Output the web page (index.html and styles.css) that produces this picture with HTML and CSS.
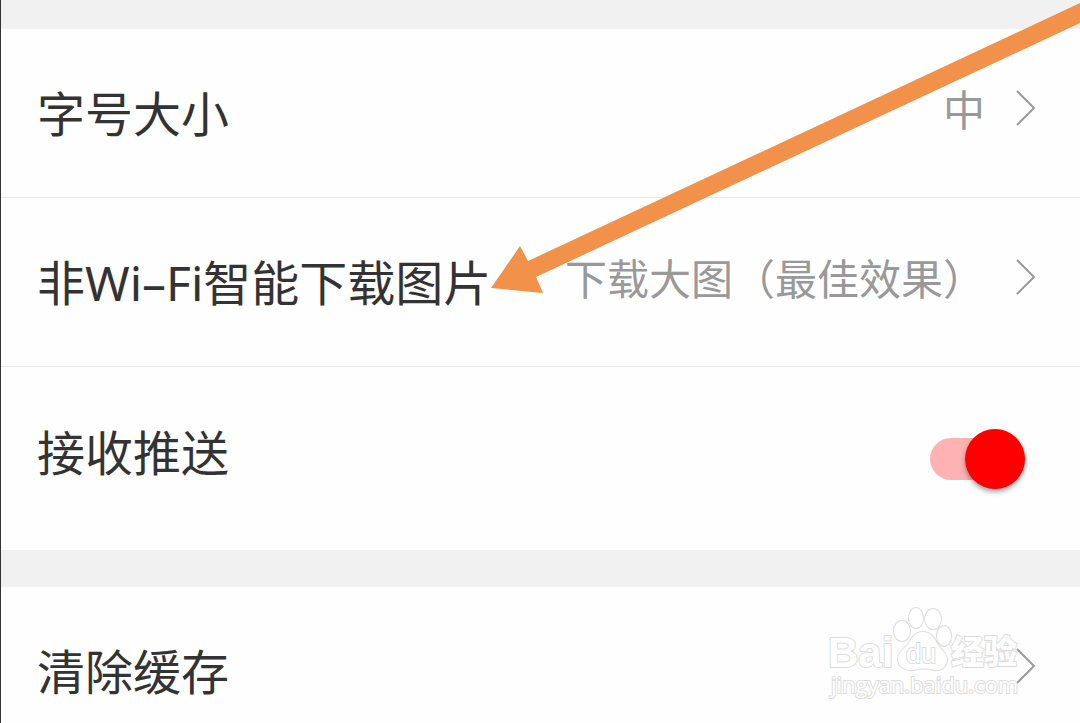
FILE: index.html
```
<!DOCTYPE html>
<html lang="zh-CN">
<head>
    <meta charset="UTF-8">
    <meta name="viewport" content="width=device-width, initial-scale=1">
    <title>设置</title>
    <link rel="stylesheet" href="styles.css">
</head>
<body>
    <main class="settings">
        <section class="group">
            <a class="row" href="#">
                <span class="label">字号大小</span>
                <span class="value">中</span>
                <svg class="chevron" viewBox="0 0 20 36" aria-hidden="true"><path d="M1 1 L18 18 L1 35"/></svg>
            </a>
            <a class="row" href="#">
                <span class="label">非Wi–Fi智能下载图片</span>
                <span class="value">下载大图（最佳效果）</span>
                <svg class="chevron" viewBox="0 0 20 36" aria-hidden="true"><path d="M1 1 L18 18 L1 35"/></svg>
            </a>
            <div class="row row-switch">
                <label class="label" for="push">接收推送</label>
                <input class="switch" type="checkbox" role="switch" id="push" checked>
            </div>
        </section>
        <section class="group">
            <a class="row" href="#">
                <span class="label">清除缓存</span>
                <svg class="chevron" viewBox="0 0 20 36" aria-hidden="true"><path d="M1 1 L18 18 L1 35"/></svg>
            </a>
        </section>
    </main>

    <svg class="arrow" viewBox="0 0 1080 300" aria-hidden="true">
        <path d="M491 288 L520 246 L528 261 L1080 3 V23 L536 277 L543 293 Z"/>
    </svg>

    <svg class="watermark" viewBox="0 0 200 96" role="img" aria-label="Baidu经验">
        <text class="wm-bai" x="0" y="64">Bai</text>
        <g class="wm-paw">
            <ellipse cx="74" cy="28" rx="8" ry="10"/>
            <ellipse cx="88" cy="15" rx="7" ry="10"/>
            <ellipse cx="105" cy="16" rx="8" ry="10"/>
            <ellipse cx="116" cy="33" rx="7" ry="10"/>
            <path d="M95 29 C103 29 106 35 110 42 C114 48 119 50 119 57 C119 65 111 68 106 67 C98 65 92 65 85 67 C78 68 70 64 70 56 C70 49 76 46 80 41 C84 35 87 29 95 29 Z"/>
        </g>
        <text class="wm-du" x="78" y="60">du</text>
        <text class="wm-name" x="123" y="61">经验</text>
        <text class="wm-url" x="3" y="90">jingyan.baidu.com</text>
    </svg>
</body>
</html>
```
FILE: styles.css
```
body {
    position: relative;
    height: 100vh;
    margin: 0;
    box-sizing: border-box;
    overflow: hidden;
    border-left: 1px solid #333;
    background-color: #f1f1f1;
    font-family: "Noto Sans", "Noto Sans CJK SC", sans-serif;
}
.settings {
    display: flex;
    flex-direction: column;
    gap: 37px;
    padding-top: 29px;
}
.group {
    background-color: #fefefe;
}
.row {
    display: flex;
    align-items: center;
    min-height: 168px;
    padding: 0 44px 0 36px;
    color: #333;
    text-decoration: none;
}
.row + .row {
    border-top: 1px solid #ebebeb;
}
.row-switch {
    min-height: 183px;
    padding-right: 55px;
}
.label {
    flex: 1;
    padding-top: 2px;
    font-size: 48px;
    line-height: 72px;
    white-space: nowrap;
}
.row-switch .label {
    padding-bottom: 14px;
}
.value {
    padding-bottom: 6px;
    margin-right: 31px;
    font-size: 42px;
    line-height: 60px;
    color: #999;
    white-space: nowrap;
}
.chevron {
    flex: none;
    width: 20px;
    height: 36px;
    padding-bottom: 10px;
    fill: none;
    stroke: #999;
    stroke-width: 2;
}
.switch {
    appearance: none;
    display: flex;
    align-items: center;
    justify-content: flex-end;
    width: 95px;
    height: 42px;
    margin: 0;
    border-radius: 21px;
    background-color: #ffb2b2;
    cursor: pointer;
}
.switch::before {
    content: "";
    width: 60px;
    height: 60px;
    flex: none;
    border-radius: 50%;
    background-color: #f00;
    box-shadow: 0 3px 5px rgba(0, 0, 0, 0.35);
}
.switch:not(:checked) {
    justify-content: flex-start;
    background-color: #ccc;
}
.arrow {
    position: absolute;
    top: 0;
    left: -1px;
    width: 1080px;
    height: 300px;
    fill: #f29149;
    pointer-events: none;
}
.watermark {
    position: absolute;
    right: 52px;
    bottom: 24px;
    width: 200px;
    height: 96px;
    overflow: visible;
    fill: #fff;
    stroke: #ddd;
    stroke-width: 2;
    paint-order: stroke;
    pointer-events: none;
}
.wm-bai {
    font: bold 42px "Liberation Sans", sans-serif;
}
.wm-du {
    font: 27px "Liberation Sans", sans-serif;
}
.wm-name {
    font: 900 33px "Noto Sans CJK SC", sans-serif;
}
.wm-url {
    font: 22px "Open Sans", sans-serif;
}
```
